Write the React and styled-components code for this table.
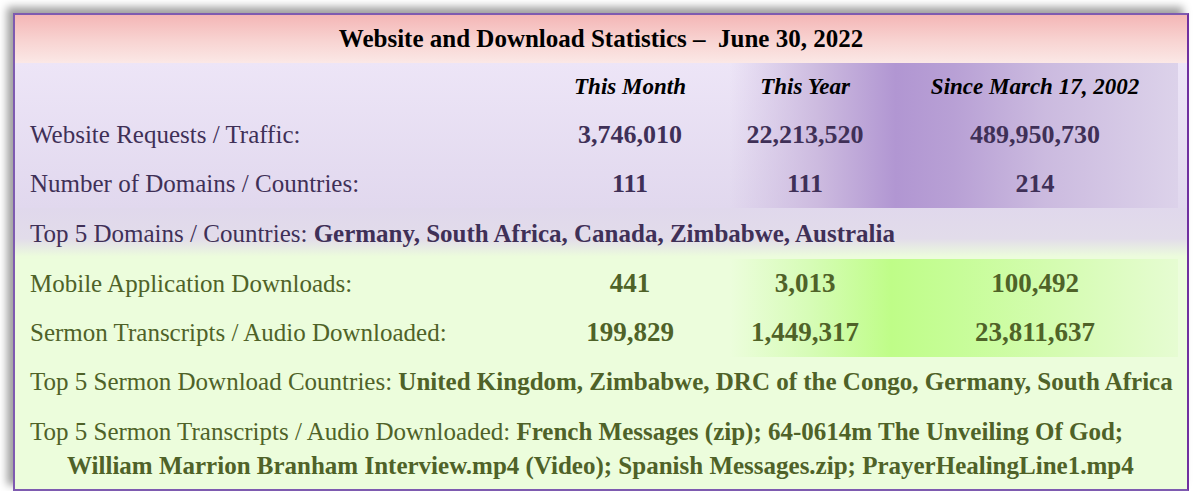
import React from "react";
import styled, { createGlobalStyle } from "styled-components";

const GlobalStyle = createGlobalStyle`
  html, body {
    margin: 0;
    padding: 0;
    background: #ffffff;
  }
  body {
    font-family: "Liberation Serif", "Times New Roman", serif;
  }
`;

const PURPLE_TEXT = "#3f3057";
const GREEN_TEXT = "#4f6228";

const siteRows = [
  { label: "Website Requests / Traffic:", values: ["3,746,010", "22,213,520", "489,950,730"] },
  { label: "Number of Domains / Countries:", values: ["111", "111", "214"] },
];

const downloadRows = [
  { label: "Mobile Application Downloads:", values: ["441", "3,013", "100,492"] },
  { label: "Sermon Transcripts / Audio Downloaded:", values: ["199,829", "1,449,317", "23,811,637"] },
];

const Frame = styled.div`
  margin: 13px 4px 0 13px;
  width: 1172px;
  border: 2px solid #7e5bb0;
  border-right-color: #7030a0;
  box-shadow: -6px -6px 8px rgba(0, 0, 0, 0.38);
  display: flex;
  flex-direction: column;
`;

const Title = styled.div`
  height: 48px;
  display: flex;
  align-items: center;
  justify-content: center;
  background: linear-gradient(to bottom, #f4b6b6 0%, #f8d4d2 55%, #fbe8e6 100%);
  font-weight: bold;
  font-size: 25px;
  color: #000;
  white-space: pre;
`;

const StatsBlock = styled.div`
  background-color: ${(p) => p.$base};
  background-image: ${(p) => p.$highlight}, ${(p) => p.$baseGradient};
  background-size: 448px 100%, 100% 100%;
  background-position: 715px 0, 0 0;
  background-repeat: no-repeat;
`;

const Row = styled.div`
  display: grid;
  grid-template-columns: 525px 180px 170px 290px;
  align-items: center;
  height: ${(p) => p.$h || 49}px;
  color: ${(p) => p.$color};
`;

const Label = styled.div`
  padding-left: 15px;
  font-size: 25px;
`;

const Value = styled.div`
  text-align: center;
  font-weight: bold;
  font-size: ${(p) => p.$size}px;
`;

const ColHead = styled.div`
  text-align: center;
  font-weight: bold;
  font-style: italic;
  font-size: 23px;
  color: #000;
`;

const Line = styled.div`
  display: flex;
  align-items: center;
  height: ${(p) => p.$h}px;
  padding-left: 15px;
  font-size: 25px;
  color: ${(p) => p.$color};
  background: ${(p) => p.$bg};
  white-space: nowrap;
`;

const Tail = styled.div`
  background: #ecfddc;
  color: ${GREEN_TEXT};
  padding: 8px 0 0 15px;
  height: 74px;
  font-size: 25px;
  white-space: nowrap;
  line-height: 34px;
`;

const Indent = styled.div`
  padding-left: 37px;
  font-weight: bold;
`;

function DataRows({ rows, color, size }) {
  return rows.map((r) => (
    <Row key={r.label} $color={color}>
      <Label>{r.label}</Label>
      {r.values.map((v, i) => (
        <Value key={i} $size={size}>
          {v}
        </Value>
      ))}
    </Row>
  ));
}

export default function App() {
  return (
    <>
      <GlobalStyle />
      <Frame>
        <Title>Website and Download Statistics –  June 30, 2022</Title>

        <StatsBlock
          $base="#e6def2"
          $baseGradient="linear-gradient(to bottom, #ede5f7, #e1d8ee)"
          $highlight="linear-gradient(to right, rgba(226,216,240,0) 0%, #ccbadf 20%, #b196d2 37%, #b8a0d5 50%, #cbbadf 70%, #dcd2ea 100%)"
        >
          <Row $h={47} $color="#000">
            <div />
            <ColHead>This Month</ColHead>
            <ColHead>This Year</ColHead>
            <ColHead>Since March 17, 2002</ColHead>
          </Row>
          <DataRows rows={siteRows} color={PURPLE_TEXT} size={26} />
        </StatsBlock>

        <Line
          $h={51}
          $color={PURPLE_TEXT}
          $bg="linear-gradient(to bottom, #e0d8ec 0%, #e2dcea 60%, #ecfcdc 95%)"
        >
          Top 5 Domains / Countries:&nbsp;<b>Germany, South Africa, Canada, Zimbabwe, Australia</b>
        </Line>

        <StatsBlock
          $base="#ecfddc"
          $baseGradient="linear-gradient(to bottom, #ecfddc, #ecfddc)"
          $highlight="linear-gradient(to right, rgba(234,252,216,0) 0%, #d6fcb6 18%, #bffd88 36%, #c6fd97 50%, #d4fcb0 72%, #e6fcd2 100%)"
        >
          <DataRows rows={downloadRows} color={GREEN_TEXT} size={27} />
        </StatsBlock>

        <Line $h={50} $color={GREEN_TEXT} $bg="#ecfddc">
          Top 5 Sermon Download Countries:&nbsp;
          <b>United Kingdom, Zimbabwe, DRC of the Congo, Germany, South Africa</b>
        </Line>

        <Tail>
          <div>
            Top 5 Sermon Transcripts / Audio Downloaded:{" "}
            <b>French Messages (zip); 64-0614m The Unveiling Of God;</b>
          </div>
          <Indent>
            William Marrion Branham Interview.mp4 (Video); Spanish Messages.zip; PrayerHealingLine1.mp4
          </Indent>
        </Tail>
      </Frame>
    </>
  );
}
